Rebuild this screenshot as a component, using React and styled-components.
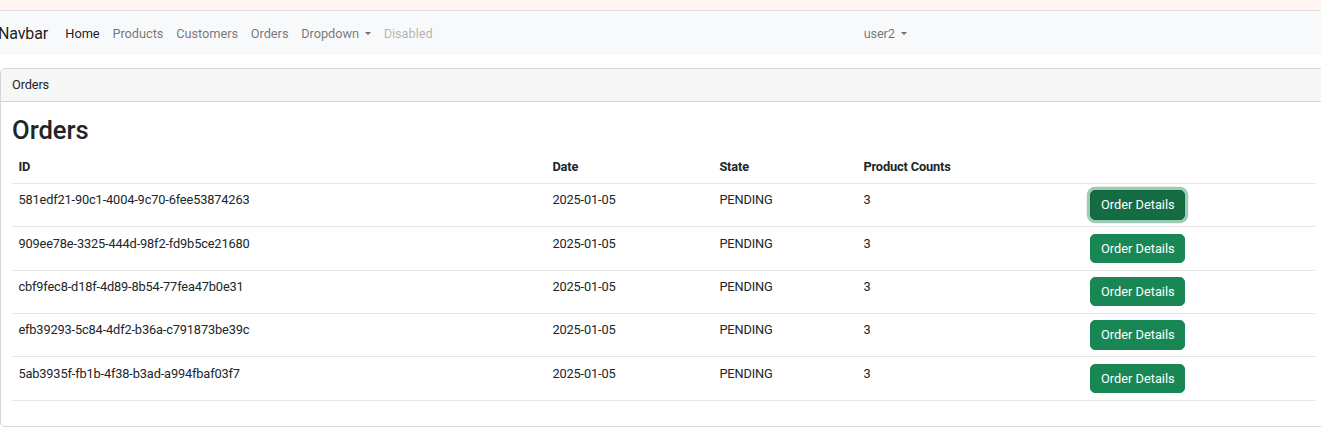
import styled, { createGlobalStyle } from 'styled-components';

const GlobalStyle = createGlobalStyle`
    body {
        margin: 0;
        overflow: hidden;
        font-family: Roboto, "Liberation Sans", sans-serif;
        font-size: 12.8px;
        line-height: 1.5;
        letter-spacing: -0.15px;
        color: #212529;
        background: #fff;
    }
`

// 주문 목록 데이터
const orders = [
    { id: '581edf21-90c1-4004-9c70-6fee53874263', date: '2025-01-05', state: 'PENDING', count: 3 },
    { id: '909ee78e-3325-444d-98f2-fd9b5ce21680', date: '2025-01-05', state: 'PENDING', count: 3 },
    { id: 'cbf9fec8-d18f-4d89-8b54-77fea47b0e31', date: '2025-01-05', state: 'PENDING', count: 3 },
    { id: 'efb39293-5c84-4df2-b36a-c791873be39c', date: '2025-01-05', state: 'PENDING', count: 3 },
    { id: '5ab3935f-fb1b-4f38-b3ad-a994fbaf03f7', date: '2025-01-05', state: 'PENDING', count: 3 },
]

const navItems = ['Home', 'Products', 'Customers', 'Orders']

// 컬럼 폭 (헤더 기준)
const columns = [
    { label: 'ID', width: 534 },
    { label: 'Date', width: 167 },
    { label: 'State', width: 144 },
    { label: 'Product Counts', width: 227 },
    { label: '' },
]

function App() {
    return <Page>
        <GlobalStyle />
        <TopStrip />
        <Navbar>
            <Brand>Navbar</Brand>
            <NavList>
                {navItems.map((item, i) => (
                    <NavLink key={item} isActive={i === 0}>{item}</NavLink>
                ))}
                <NavLink hasCaret>Dropdown</NavLink>
                <NavLink isDisabled>Disabled</NavLink>
            </NavList>
            <UserNav>
                <NavLink hasCaret>user2</NavLink>
            </UserNav>
        </Navbar>

        <Card>
            <CardHeader>Orders</CardHeader>
            <CardBody>
                <Title>Orders</Title>
                <Table>
                    <thead>
                        <Row>
                            {columns.map((col, i) => (
                                <Th key={i} w={col.width}>{col.label}</Th>
                            ))}
                        </Row>
                    </thead>
                    <tbody>
                        {orders.map((order, i) => (
                            <Row key={order.id}>
                                <Td>{order.id}</Td>
                                <Td>{order.date}</Td>
                                <Td>{order.state}</Td>
                                <Td>{order.count}</Td>
                                <Td>
                                    <DetailButton isFocused={i === 0}>Order Details</DetailButton>
                                </Td>
                            </Row>
                        ))}
                    </tbody>
                </Table>
            </CardBody>
        </Card>
    </Page>
}
export default App

const Page = styled.div`
    width: 1321px;
`

const TopStrip = styled.div`
    height: 10px;
    background-color: #fff5f3;
    border-bottom: 1px solid #e6dcdc;
`

const Navbar = styled.nav`
    display: flex;
    align-items: center;
    box-sizing: border-box;
    height: 44px;
    padding-top: 1px;
    background-color: #f8f9fa;
`

const Brand = styled.span`
    font-size: 16px;
    color: rgba(0, 0, 0, 0.9);
    margin-left: -2px;
    margin-right: 11px;
`

const NavList = styled.div`
    display: flex;
    letter-spacing: -0.05px;
`

const UserNav = styled.div`
    display: flex;
    margin-left: auto;
    margin-right: 408px;
`

const NavLink = styled.span`
    padding: 6.4px;
    color: rgba(0, 0, 0, 0.55);
    ${(props) => props.isActive && 'color: rgba(0, 0, 0, 0.9);'}
    ${(props) => props.isDisabled && 'color: rgba(0, 0, 0, 0.3);'}
    cursor: pointer;
    // 드롭다운 삼각형
    ${(props) => props.hasCaret && `
        &::after {
            content: "";
            display: inline-block;
            margin-left: 0.45em;
            vertical-align: 0.255em;
            border-top: 0.3em solid;
            border-right: 0.3em solid transparent;
            border-left: 0.3em solid transparent;
        }
    `}
`

const Card = styled.div`
    width: 1329px;
    margin-top: 13px;
    border: 1px solid #d6d6d6;
    border-radius: 5px;
    box-sizing: border-box;
`

const CardHeader = styled.div`
    padding: 6.4px 11px;
    background-color: #f7f7f7;
    border-bottom: 1px solid #d6d6d6;
    border-radius: 5px 5px 0 0;
`

const CardBody = styled.div`
    padding: 12.8px 12.8px 12.8px 11px;
`

const Title = styled.h2`
    margin: 0 0 5.4px 0;
    font-size: 25.6px;
    font-weight: 500;
    line-height: 1.2;
    letter-spacing: 0;
`

const Table = styled.table`
    width: 100%;
    table-layout: fixed;
    border-collapse: collapse;
    margin-bottom: 12.8px;
`

const Row = styled.tr`
    border-bottom: 1px solid #e6e6e6;
`

const Th = styled.th`
    box-sizing: border-box;
    text-align: left;
    vertical-align: bottom;
    font-weight: 700;
    padding: 6.4px;
    ${(props) => props.w && `width: ${props.w}px;`}
`

const Td = styled.td`
    padding: 6.4px;
    vertical-align: top;
`

const DetailButton = styled.button`
    font-family: inherit;
    font-size: 12.8px;
    line-height: 1.5;
    letter-spacing: 0;
    color: #fff;
    background-color: ${(props) => props.isFocused ? '#146c43' : '#198754'};
    border: 1px solid ${(props) => props.isFocused ? '#13653f' : '#198754'};
    border-radius: 5px;
    padding: 4.2px 9.6px;
    cursor: pointer;
    ${(props) => props.isFocused && 'box-shadow: 0 0 0 3.2px rgba(60, 153, 110, 0.5);'}
`
